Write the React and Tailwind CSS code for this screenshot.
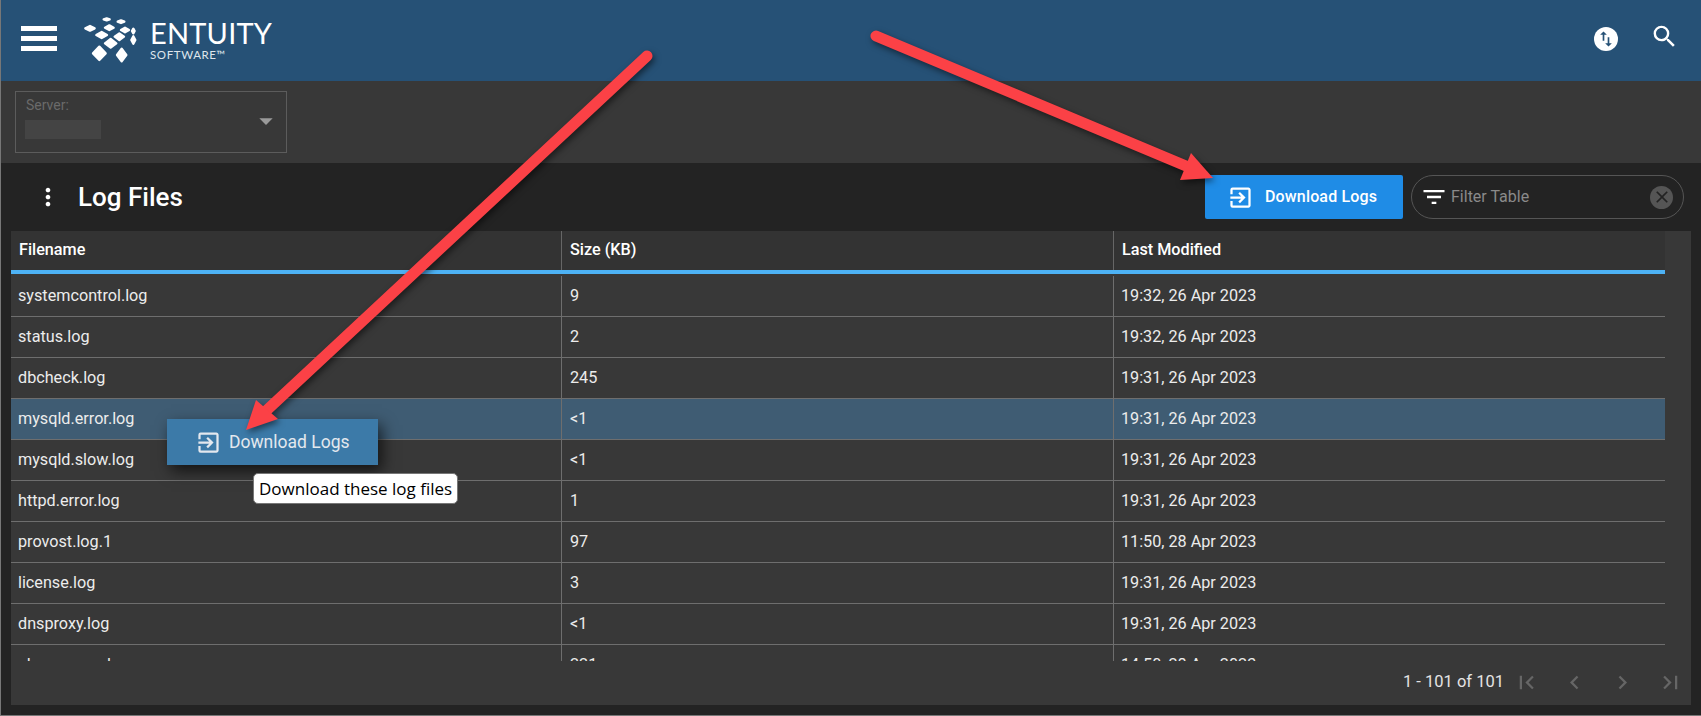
import React from 'react';
import {
  MdSearch, MdExitToApp, MdFilterList, MdFirstPage, MdLastPage, MdChevronLeft,
  MdChevronRight, MdMoreVert, MdClose, MdArrowDropDown, MdSwapVert,
} from 'react-icons/md';

const rows = [
  ['systemcontrol.log', '9', '19:32, 26 Apr 2023'],
  ['status.log', '2', '19:32, 26 Apr 2023'],
  ['dbcheck.log', '245', '19:31, 26 Apr 2023'],
  ['mysqld.error.log', '<1', '19:31, 26 Apr 2023'],
  ['mysqld.slow.log', '<1', '19:31, 26 Apr 2023'],
  ['httpd.error.log', '1', '19:31, 26 Apr 2023'],
  ['provost.log.1', '97', '11:50, 28 Apr 2023'],
  ['license.log', '3', '19:31, 26 Apr 2023'],
  ['dnsproxy.log', '<1', '19:31, 26 Apr 2023'],
  ['alarmserver.log', '221', '14:50, 28 Apr 2023'],
];

// logo tiles: cx, cy, rx, ry
const tiles = [
  [110, 43, 9, 3], [153, 50, 10, 4],
  [60, 70, 14, 7], [118, 68, 13, 7], [165, 75, 12, 7], [190, 78, 4, 7],
  [95, 90, 16, 9], [148, 95, 14, 10], [190, 105, 6, 11],
  [122, 115, 17, 13],
  [88, 145, 19, 20], [155, 150, 14, 19],
];

function Logo() {
  return (
    <div className="flex items-start">
      <svg width="60" height="50" viewBox="30 30 180 150" className="mt-[15px] ml-[23px]">
        {tiles.map(([cx, cy, rx, ry], i) => (
          <polygon
            key={i}
            points={`${cx - rx},${cy} ${cx},${cy - ry} ${cx + rx},${cy} ${cx},${cy + ry}`}
            fill="white"
            stroke="white"
            strokeWidth="7"
            strokeLinejoin="round"
          />
        ))}
      </svg>
      <div className="ml-[10px] mt-[16px] font-['Lato',sans-serif] text-white">
        <div className="text-[29px] leading-[34px] tracking-[0.2px] font-normal">ENTUITY</div>
        <div className="text-[11.5px] leading-[12px] tracking-[0.6px] text-[#dfe6ec] -mt-[1px]">SOFTWARE™</div>
      </div>
    </div>
  );
}

function Arrow({ shaft, head }) {
  return (
    <g>
      <line x1={shaft[0]} y1={shaft[1]} x2={shaft[2]} y2={shaft[3]} stroke="#fb4146" strokeWidth="11" strokeLinecap="round" />
      <polygon points={head} fill="#fb4146" />
    </g>
  );
}

export default function App() {
  return (
    <div className="relative h-[716px] w-full overflow-hidden flex flex-col bg-[#232323] border-l border-b border-[#777777] font-['Roboto',sans-serif] text-white">
      {/* top bar */}
      <header className="h-[81px] shrink-0 bg-[#265176] flex">
        <div className="ml-[20px] mt-[26px] w-[36px] flex flex-col gap-[5px]">
          <div className="h-[5px] bg-white" />
          <div className="h-[5px] bg-white" />
          <div className="h-[5px] bg-white" />
        </div>
        <Logo />
        <div className="ml-auto flex items-start">
          <div className="mt-[27px] w-[24px] h-[24px] rounded-full bg-white flex items-center justify-center text-[#265176]">
            <MdSwapVert size={20} />
          </div>
          <MdSearch size={29} className="mt-[22px] ml-[32px] mr-[22px]" />
        </div>
      </header>

      {/* server select */}
      <div className="h-[82px] shrink-0 bg-[#383838] pl-[14px] pt-[10px]">
        <div className="relative w-[272px] h-[62px] border border-[#5c5c5c] pl-[10px] pt-[3px]">
          <div className="text-[14px] leading-[20px] text-[#6a6a6a]">Server:</div>
          <div className="mt-[5px] -ml-[1px] w-[76px] h-[19px] bg-[#444444]" />
          <MdArrowDropDown size={32} className="absolute right-[4px] top-[13px] text-[#9a9a9a]" />
        </div>
      </div>

      {/* log files panel */}
      <div className="flex-1 min-h-0 flex flex-col">
        <div className="h-[68px] shrink-0 flex items-center pr-[17px]">
          <MdMoreVert size={28} className="ml-[33px]" />
          <h1 className="ml-[16px] text-[26px] font-medium leading-none">Log Files</h1>
          <button className="ml-auto w-[198px] h-[44px] rounded-[2px] bg-[#1f8ce6] flex items-center pl-[22px] text-[16px] font-medium tracking-[0.15px]">
            <MdExitToApp size={27} />
            <span className="ml-[11px]">Download Logs</span>
          </button>
          <div className="ml-[8px] w-[273px] h-[44px] rounded-full border border-[#555555] flex items-center pl-[8px] pr-[10px]">
            <MdFilterList size={28} />
            <span className="ml-[3px] text-[16px] text-[#8a8a8a]">Filter Table</span>
            <span className="ml-auto w-[23px] h-[23px] rounded-full bg-[#555555] flex items-center justify-center text-[#222222]">
              <MdClose size={20} />
            </span>
          </div>
        </div>

        <div className="mx-[10px] mb-[10px] flex-1 min-h-0 bg-[#383838] flex flex-col">
          {/* column headers */}
          <div className="w-[1654px] shrink-0">
            <div className="h-[39px] bg-[#333333] grid grid-cols-[550px_552px_1fr] text-[16.2px] font-medium">
              <div className="pl-[8px] flex items-center">Filename</div>
              <div className="pl-[8px] flex items-center border-l border-[#666666]">Size (KB)</div>
              <div className="pl-[8px] flex items-center border-l border-[#666666]">Last Modified</div>
            </div>
            <div className="h-[4px] bg-[#4db2f5]" />
          </div>

          {/* rows */}
          <div className="h-[387px] w-[1654px] shrink-0 overflow-hidden pt-[2px] text-[16.2px] text-[#ececec]">
            {rows.map((r, i) => (
              <div
                key={r[0]}
                className={`h-[41px] grid grid-cols-[550px_552px_1fr] border-b border-[#6e6e6e] ${i === 3 ? 'bg-[#3f5c73]' : ''}`}
              >
                <div className="pl-[7px] pt-[1px] flex items-center">{r[0]}</div>
                <div className="pl-[8px] pt-[1px] flex items-center border-l border-[#6e6e6e]">{r[1]}</div>
                <div className="pl-[7px] pt-[1px] flex items-center border-l border-[#6e6e6e]">{r[2]}</div>
              </div>
            ))}
          </div>

          {/* pager */}
          <div className="flex-1 flex items-center justify-end pb-[2px]">
            <span className="text-[16.5px] text-[#e4e4e4] -mr-[2px]">1 - 101 of 101</span>
            <div className="flex text-[#666666] -mr-[3px]">
              <span className="w-[48px] flex justify-center"><MdFirstPage size={27} /></span>
              <span className="w-[48px] flex justify-center"><MdChevronLeft size={27} /></span>
              <span className="w-[48px] flex justify-center"><MdChevronRight size={27} /></span>
              <span className="w-[48px] flex justify-center"><MdLastPage size={27} /></span>
            </div>
          </div>
        </div>
      </div>

      {/* row hover button and its tooltip */}
      <button className="absolute left-[166px] top-[419px] w-[211px] h-[46px] bg-[#3c7aa8] flex items-center pl-[28px] text-[17.5px] text-[#e3e8ee] shadow-[4px_6px_14px_rgba(0,0,0,0.65)]">
        <MdExitToApp size={27} />
        <span className="ml-[7px]">Download Logs</span>
      </button>
      <div className="absolute left-[252px] top-[473px] h-[31px] px-[5px] flex items-center rounded-[5px] bg-white border border-[#777777] text-black text-[17px] font-['Open_Sans',sans-serif] whitespace-nowrap">
        Download these log files
      </div>

      {/* annotation arrows */}
      <svg className="absolute left-0 top-0 pointer-events-none drop-shadow-[2px_3px_3px_rgba(0,0,0,0.5)]" width="1701" height="716">
        <Arrow shaft={[646, 56, 266, 410]} head="245,430 255,400 277,419" />
        <Arrow shaft={[875, 36, 1185, 166]} head="1212,178 1190,153 1179,180" />
      </svg>
    </div>
  );
}
